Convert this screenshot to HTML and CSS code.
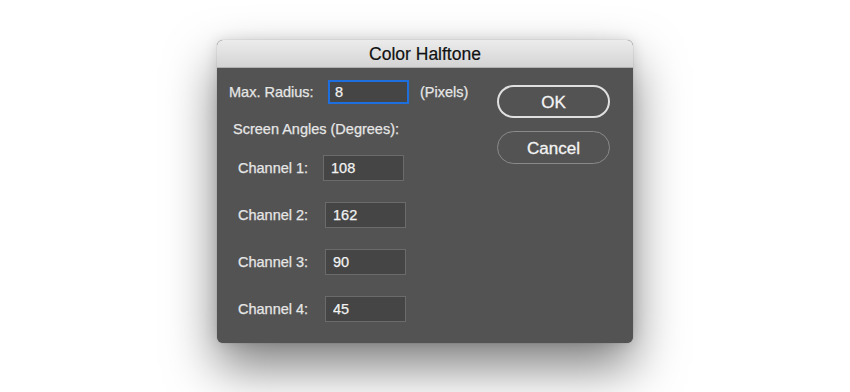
FILE: index.html
```html
<!DOCTYPE html>
<html lang="en">
<head>
    <meta charset="UTF-8">
    <title>Color Halftone</title>
    <link rel="stylesheet" href="styles.css">
</head>
<body>
    <div class="dialog">
        <div class="titlebar">Color Halftone</div>
        <div class="dialog-body">
            <div class="fields">
                <div class="radius-row">
                    <label for="radius">Max. Radius:</label>
                    <input type="text" id="radius" class="field focused" value="8">
                    <span class="unit">(Pixels)</span>
                </div>

                <p class="section-title">Screen Angles (Degrees):</p>

                <div class="channels">
                    <div class="channel-row first">
                        <label for="ch1">Channel 1:</label>
                        <input type="text" id="ch1" class="field" value="108">
                    </div>
                    <div class="channel-row">
                        <label for="ch2">Channel 2:</label>
                        <input type="text" id="ch2" class="field" value="162">
                    </div>
                    <div class="channel-row">
                        <label for="ch3">Channel 3:</label>
                        <input type="text" id="ch3" class="field" value="90">
                    </div>
                    <div class="channel-row">
                        <label for="ch4">Channel 4:</label>
                        <input type="text" id="ch4" class="field" value="45">
                    </div>
                </div>
            </div>

            <div class="buttons">
                <button class="btn btn-default">OK</button>
                <button class="btn">Cancel</button>
            </div>
        </div>
    </div>
</body>
</html>
```

FILE: styles.css
```css
* {
    margin: 0;
    padding: 0;
    box-sizing: border-box;
}

body {
    font-family: 'Liberation Sans', Arial, sans-serif;
    background: #ffffff;
    height: 392px;
    overflow: hidden;
}

.dialog {
    width: 416px;
    margin: 40px auto 0;
    background: #535353;
    border-radius: 6px;
    overflow: hidden;
    box-shadow: 0 24px 50px rgba(0, 0, 0, 0.5), 0 0 14px rgba(0, 0, 0, 0.12), 0 0 1px rgba(0, 0, 0, 0.4);
}

.titlebar {
    height: 28px;
    line-height: 29px;
    text-align: center;
    font-size: 17.5px;
    color: #111;
    background: linear-gradient(#ececec, #d4d4d4);
    border-bottom: 1px solid #b0b0b0;
    -webkit-text-stroke: 0.2px #111;
}

.dialog-body {
    display: flex;
    padding: 12px 0 21px;
}

.fields {
    width: 280px;
    color: #e6e6e6;
    font-size: 14.5px;
    -webkit-text-stroke: 0.25px #e6e6e6;
}

.radius-row {
    display: flex;
    align-items: center;
    padding-left: 12px;
    height: 24px;
}

.radius-row label {
    width: 99px;
}

.unit {
    margin-left: 11px;
}

.field {
    font-family: inherit;
    font-size: 14.5px;
    color: #f2f2f2;
    -webkit-text-stroke: 0.25px #f2f2f2;
    background: #454545;
    border: 1px solid #6b6b6b;
    width: 81px;
    height: 26px;
    padding: 0 7px;
    outline: none;
}

.field.focused {
    height: 24px;
    border: 2px solid #1d6fe0;
    padding: 0 5px;
}

.section-title {
    padding-left: 16px;
    margin-top: 17px;
    line-height: 17px;
}

.channels {
    display: flex;
    flex-direction: column;
    gap: 21px;
    margin-top: 17px;
    padding-left: 21px;
}

.channel-row {
    display: flex;
    align-items: center;
}

.channel-row label {
    width: 87px;
}

.channel-row.first label {
    width: 85px;
}

.buttons {
    display: flex;
    flex-direction: column;
    gap: 13px;
    padding-top: 5px;
}

.btn {
    width: 113px;
    height: 33px;
    border-radius: 17px;
    background: transparent;
    border: 1px solid #8a8a8a;
    color: #f4f4f4;
    -webkit-text-stroke: 0.3px #f4f4f4;
    font-family: inherit;
    font-size: 17px;
    padding-top: 3px;
}

.btn-default {
    border: 2px solid #e0e0e0;
}
```
